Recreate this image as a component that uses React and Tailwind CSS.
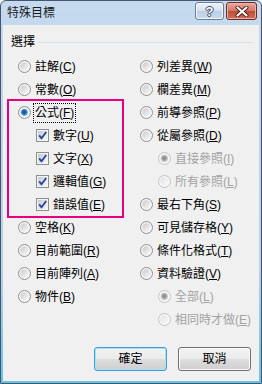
import React from 'react';

const font = { fontFamily: '"Liberation Sans", "Noto Sans CJK TC", sans-serif' };

// Gradients shared by every radio and checkbox
const Defs = () => (
  <svg width="0" height="0" className="absolute">
    <defs>
      <linearGradient id="radioIn" x1="0" y1="0" x2="1" y2="1">
        <stop offset="0" stopColor="#c9c9c9" />
        <stop offset="1" stopColor="#fbfbfb" />
      </linearGradient>
      <linearGradient id="radioInOff" x1="0" y1="0" x2="1" y2="1">
        <stop offset="0" stopColor="#e2e2e2" />
        <stop offset="1" stopColor="#fafafa" />
      </linearGradient>
      <radialGradient id="radioDot" cx="0.45" cy="0.45" r="0.6">
        <stop offset="0" stopColor="#0b3f80" />
        <stop offset="0.55" stopColor="#2a78c8" />
        <stop offset="1" stopColor="#9cd6f4" />
      </radialGradient>
      <radialGradient id="radioDotOff" cx="0.45" cy="0.45" r="0.6">
        <stop offset="0" stopColor="#7d7d7d" />
        <stop offset="1" stopColor="#d0d0d0" />
      </radialGradient>
      <linearGradient id="boxIn" x1="0" y1="0" x2="1" y2="1">
        <stop offset="0" stopColor="#c6cbd2" />
        <stop offset="1" stopColor="#f7f7f7" />
      </linearGradient>
    </defs>
  </svg>
);

const Radio = ({ checked, disabled }) => (
  <svg width="13" height="13" viewBox="0 0 13 13" className="shrink-0">
    <circle cx="6.5" cy="6.5" r="6" fill="#f6f6f6" stroke={disabled ? '#c2c2c2' : '#8e8f8f'} />
    <circle cx="6.5" cy="6.5" r="4.2" fill={disabled ? 'url(#radioInOff)' : 'url(#radioIn)'} />
    {checked && (
      <circle cx="6.5" cy="6.5" r="3.4" fill={disabled ? 'url(#radioDotOff)' : 'url(#radioDot)'} />
    )}
  </svg>
);

const Check = () => (
  <svg width="13" height="13" viewBox="0 0 13 13" className="shrink-0">
    <rect x="0.5" y="0.5" width="12" height="12" fill="#f4f4f4" stroke="#8e8f8f" />
    <rect x="2" y="2" width="9" height="9" fill="url(#boxIn)" />
    <path d="M3.2 6.4 L5.5 9.2 L10.2 3" fill="none" stroke="#24449c" strokeWidth="1.8" />
  </svg>
);

const Label = ({ text, k, disabled }) => (
  <span className={`text-[12px] leading-none whitespace-nowrap ${disabled ? 'text-[#a3a3a3]' : 'text-black'}`}>
    {text}(<u className="underline-offset-[1px]">{k}</u>)
  </span>
);

const RadioRow = ({ text, k, checked, disabled, sub }) => (
  <div className={`flex h-[23px] items-center gap-[4px] ${sub ? 'pl-[18px]' : ''}`}>
    <Radio checked={checked} disabled={disabled} />
    <Label text={text} k={k} disabled={disabled} />
  </div>
);

const CheckRow = ({ text, k }) => (
  <div className="flex h-[23px] items-center gap-[4px] pl-[18px]">
    <Check />
    <Label text={text} k={k} />
  </div>
);

const Button = ({ children, primary }) => (
  <button
    className={`h-[24px] w-[73px] rounded-[3px] border text-[12px] text-black bg-[linear-gradient(#f2f2f2_0%,#ebebeb_50%,#dddddd_50%,#cfcfcf_100%)] ${
      primary ? 'border-[#3c9fd8] shadow-[inset_0_0_0_1px_#a8e0f6]' : 'border-[#707070] shadow-[inset_0_0_0_1px_#fbfbfb]'
    }`}
  >
    {children}
  </button>
);

export default function App() {
  return (
    <div style={font} className="relative flex h-[384px] w-[262px] flex-col overflow-hidden rounded-t-[6px] border border-[#44566d] bg-[linear-gradient(#c5d9ef,#b9d0e9_70%,#67c4e2)]">
      <Defs />

      {/* Title bar */}
      <div className="flex h-[24px] items-start">
        <span className="pl-[6px] pt-[6px] text-[12px] leading-none text-[#1a1a1a]">特殊目標</span>
        <div className="ml-auto mr-[4px] mt-[1px] flex gap-[2px]">
          <div className="flex h-[18px] w-[29px] items-center justify-center rounded-[3px] border border-[#6b7d96] bg-[linear-gradient(#eef3f9,#d4e0ee_50%,#bccee4_50%,#c9daee)] shadow-[inset_0_0_0_1px_#f4f8fc]">
            <span className="text-[13px] font-bold leading-none text-white [text-shadow:1px_0_0_#3c4b5e,-1px_0_0_#3c4b5e,0_1px_0_#3c4b5e,0_-1px_0_#3c4b5e]">?</span>
          </div>
          <div className="flex h-[18px] w-[31px] items-center justify-center rounded-[3px] border border-[#6e2b22] bg-[linear-gradient(#e9a99c,#d37565_50%,#c04a34_50%,#d0705a)] shadow-[inset_0_0_0_1px_#eab3a6]">
            <svg width="14" height="11" viewBox="0 0 14 11">
              <path d="M2.5 1.5 L11.5 9.5 M11.5 1.5 L2.5 9.5" stroke="#4a1c14" strokeWidth="4" strokeLinecap="round" />
              <path d="M2.5 1.5 L11.5 9.5 M11.5 1.5 L2.5 9.5" stroke="#ffffff" strokeWidth="2.2" strokeLinecap="round" />
            </svg>
          </div>
        </div>
      </div>

      {/* Client area */}
      <div className="mx-[2px] mb-[2px] flex flex-1 flex-col bg-[#f0f0f0] pt-[9px]">
        <div className="flex h-[16px] items-center pl-[8px] pr-[6px]">
          <span className="text-[12px] leading-none text-black">選擇</span>
          <div className="ml-[3px] h-px flex-1 bg-[#d5dfe5]" />
        </div>

        <div className="mt-[5px] flex pl-[15px]">
          <div className="flex w-[122px] flex-col">
            <RadioRow text="註解" k="C" />
            <RadioRow text="常數" k="O" />
            <div className="-my-[2px] -ml-[11px] w-[117px] border-2 border-[#e4007f] pl-[9px]">
              <div className="flex h-[23px] items-center gap-[2px]">
                <Radio checked />
                <span className="border border-dotted border-black px-[1px] text-[12px] leading-[18px] text-black">
                  公式(<u>F</u>)
                </span>
              </div>
              <CheckRow text="數字" k="U" />
              <CheckRow text="文字" k="X" />
              <CheckRow text="邏輯值" k="G" />
              <CheckRow text="錯誤值" k="E" />
            </div>
            <RadioRow text="空格" k="K" />
            <RadioRow text="目前範圍" k="R" />
            <RadioRow text="目前陣列" k="A" />
            <RadioRow text="物件" k="B" />
          </div>

          <div className="flex flex-1 flex-col">
            <RadioRow text="列差異" k="W" />
            <RadioRow text="欄差異" k="M" />
            <RadioRow text="前導參照" k="P" />
            <RadioRow text="從屬參照" k="D" />
            <RadioRow text="直接參照" k="I" checked disabled sub />
            <RadioRow text="所有參照" k="L" disabled sub />
            <RadioRow text="最右下角" k="S" />
            <RadioRow text="可見儲存格" k="Y" />
            <RadioRow text="條件化格式" k="T" />
            <RadioRow text="資料驗證" k="V" />
            <RadioRow text="全部" k="L" checked disabled sub />
            <RadioRow text="相同時才做" k="E" disabled sub />
          </div>
        </div>

        <div className="mt-auto mb-[10px] flex justify-end gap-[11px] pr-[8px]">
          <Button primary>確定</Button>
          <Button>取消</Button>
        </div>
      </div>
    </div>
  );
}
